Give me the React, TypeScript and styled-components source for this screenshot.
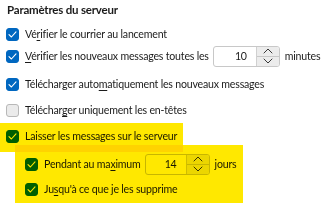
import React from "react";
import styled, { createGlobalStyle } from "styled-components";

const Global = createGlobalStyle`
  html, body {
    margin: 0;
    padding: 0;
    background: #ffffff;
  }
  body {
    font-family: Lato, "Noto Sans", sans-serif;
    color: #1b1b1b;
  }
`;

const Panel = styled.div`
  position: relative;
  width: 323px;
  height: 203px;
  overflow: hidden;
  padding: 0 0 0 6px;
  box-sizing: border-box;
`;

const Title = styled.h2`
  margin: 0;
  padding: 1px 0 0 1px;
  font-size: 11.5px;
  letter-spacing: -0.2px;
  font-weight: 700;
  line-height: 17px;
  color: #1b1b1b;
`;

const List = styled.div`
  display: flex;
  flex-direction: column;
`;

const Row = styled.div<{ indent?: boolean; space: number }>`
  display: flex;
  align-items: center;
  gap: 6px;
  height: 22px;
  margin-top: ${({ space }) => space}px;
  padding-left: ${({ indent }) => (indent ? "19px" : "0")};
  font-size: 10.6px;
  letter-spacing: -0.2px;
  white-space: nowrap;
  position: relative;
  z-index: 1;
`;

const Box = styled.span<{ checked?: boolean }>`
  width: 13px;
  height: 13px;
  box-sizing: border-box;
  border-radius: 3px;
  flex: none;
  display: flex;
  align-items: center;
  justify-content: center;
  background: ${({ checked }) => (checked ? "#0067c0" : "#ebebeb")};
  border: 1px solid ${({ checked }) => (checked ? "#0067c0" : "#b8b8b8")};
`;

const Key = styled.span`
  text-decoration: underline;
  text-underline-offset: 2px;
  text-decoration-thickness: 1px;
`;

const Spinner = styled.div<{ w: number }>`
  display: flex;
  width: ${({ w }) => w}px;
  height: 21px;
  flex: none;
  box-sizing: border-box;
  border: 1px solid #c8c8c8;
  border-radius: 3px;
  background: #ffffff;
  margin: 0 -1px 0 -2px;
`;

const SpinValue = styled.span`
  flex: 1;
  text-align: right;
  padding-right: 9px;
  line-height: 19px;
  font-size: 10.6px;
`;

const SpinButtons = styled.div`
  width: 22px;
  display: flex;
  flex-direction: column;
  background: #ececec;
  border-left: 1px solid #d0d0d0;
  border-radius: 0 2px 2px 0;
`;

const SpinButton = styled.span<{ down?: boolean }>`
  flex: 1;
  display: flex;
  align-items: center;
  justify-content: center;
  border-top: ${({ down }) => (down ? "1px solid #c8c8c8" : "none")};
`;

// highlighter marks drawn over the options, multiplied like a marker pen
const Mark = styled.div`
  position: absolute;
  background: #ffe800;
  mix-blend-mode: multiply;
  z-index: 2;
  pointer-events: none;
`;

const KeepMark = styled(Mark)`
  left: 0;
  top: 123px;
  width: 183px;
  height: 29px;
`;

const SubMark = styled(Mark)`
  left: 15px;
  top: 145px;
  width: 228px;
  height: 58px;
`;

function Check({ checked }: { checked?: boolean }) {
  return (
    <Box checked={checked}>
      {checked && (
        <svg width="9" height="9" viewBox="0 0 9 9" fill="none">
          <path d="M1 4.6 L3.4 7 L8 1.8" stroke="#ffffff" strokeWidth="1.1" strokeLinecap="round" strokeLinejoin="round" />
        </svg>
      )}
    </Box>
  );
}

function Chevron({ down }: { down?: boolean }) {
  return (
    <svg width="10" height="6" viewBox="0 0 10 6" fill="none">
      <path
        d={down ? "M1 1 L5 5 L9 1" : "M1 5 L5 1 L9 5"}
        stroke="#3a3a3a"
        strokeWidth="1"
        strokeLinecap="round"
        strokeLinejoin="round"
      />
    </svg>
  );
}

function NumberBox({ value, width }: { value: number; width: number }) {
  return (
    <Spinner w={width}>
      <SpinValue>{value}</SpinValue>
      <SpinButtons>
        <SpinButton>
          <Chevron />
        </SpinButton>
        <SpinButton down>
          <Chevron down />
        </SpinButton>
      </SpinButtons>
    </Spinner>
  );
}

export default function App() {
  return (
    <>
      <Global />
      <Panel>
        <Title>Paramètres du serveur</Title>
        <List>
          <Row space={5}>
            <Check checked />
            <span>
              Vé<Key>r</Key>ifier le courrier au lancement
            </span>
          </Row>
          <Row space={0}>
            <Check checked />
            <span>
              <Key>V</Key>érifier les nouveaux messages toutes les
            </span>
            <NumberBox value={10} width={67} />
            <span>minutes</span>
          </Row>
          <Row space={6}>
            <Check checked />
            <span>
              Télécharger auto<Key>m</Key>atiquement les nouveaux messages
            </span>
          </Row>
          <Row space={4}>
            <Check />
            <span>
              Téléchar<Key>g</Key>er uniquement les en-têtes
            </span>
          </Row>
          <Row space={4}>
            <Check checked />
            <span>Laisser les messages sur le serveur</span>
          </Row>
          <Row indent space={6}>
            <Check checked />
            <span>
              Pendant au ma<Key>x</Key>imum
            </span>
            <NumberBox value={14} width={65} />
            <span>jours</span>
          </Row>
          <Row indent space={3}>
            <Check checked />
            <span>
              Ju<Key>s</Key>qu'à ce que je les supprime
            </span>
          </Row>
        </List>
        <KeepMark />
        <SubMark />
      </Panel>
    </>
  );
}
